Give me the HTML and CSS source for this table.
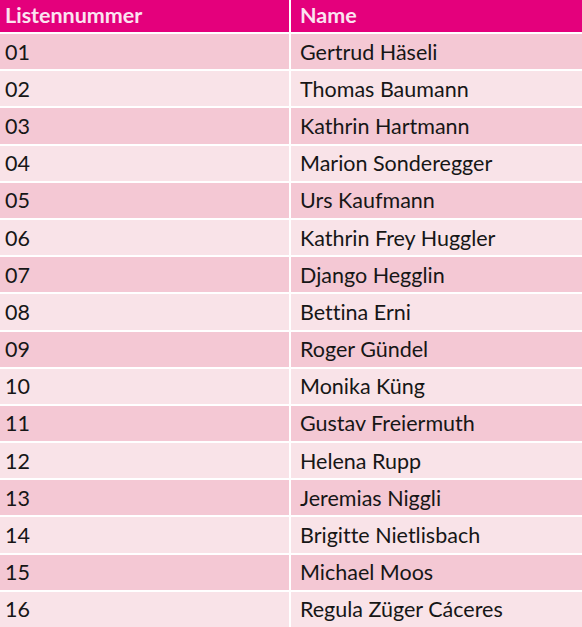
FILE: index.html
```html
<!DOCTYPE html>
<html lang="de">
<head>
<meta charset="utf-8">
<link rel="stylesheet" href="styles.css">
</head>
<body>
<div class="table">
  <div class="cell head">Listennummer</div><div class="cell head name">Name</div>
  <div class="cell odd">01</div><div class="cell odd name">Gertrud Häseli</div>
  <div class="cell even">02</div><div class="cell even name">Thomas Baumann</div>
  <div class="cell odd">03</div><div class="cell odd name">Kathrin Hartmann</div>
  <div class="cell even">04</div><div class="cell even name">Marion Sonderegger</div>
  <div class="cell odd">05</div><div class="cell odd name">Urs Kaufmann</div>
  <div class="cell even">06</div><div class="cell even name">Kathrin Frey Huggler</div>
  <div class="cell odd">07</div><div class="cell odd name">Django Hegglin</div>
  <div class="cell even">08</div><div class="cell even name">Bettina Erni</div>
  <div class="cell odd">09</div><div class="cell odd name">Roger Gündel</div>
  <div class="cell even">10</div><div class="cell even name">Monika Küng</div>
  <div class="cell odd">11</div><div class="cell odd name">Gustav Freiermuth</div>
  <div class="cell even">12</div><div class="cell even name">Helena Rupp</div>
  <div class="cell odd">13</div><div class="cell odd name">Jeremias Niggli</div>
  <div class="cell even">14</div><div class="cell even name">Brigitte Nietlisbach</div>
  <div class="cell odd">15</div><div class="cell odd name">Michael Moos</div>
  <div class="cell even">16</div><div class="cell even name">Regula Züger Cáceres</div>
</div>
</body>
</html>
```
FILE: styles.css
```css
html, body {
  margin: 0;
  padding: 0;
  background: #ffffff;
}
.table {
  display: grid;
  grid-template-columns: 289px 291px;
  grid-template-rows: 32px repeat(16, 35.2px);
  column-gap: 2px;
  row-gap: 2px;
  font-family: Lato, "Liberation Sans", sans-serif;
  font-size: 21.5px;
  font-variant-ligatures: none;
  color: #161616;
}
.cell {
  display: flex;
  align-items: center;
  padding-left: 5px;
}
.cell.name {
  padding-left: 9px;
}
.head {
  background: #e4007c;
  color: #fbe3f0;
  font-weight: bold;
  align-items: flex-start;
  padding-top: 2px;
}
.odd {
  background: #f4c8d4;
}
.even {
  background: #f9e3e8;
}
```
